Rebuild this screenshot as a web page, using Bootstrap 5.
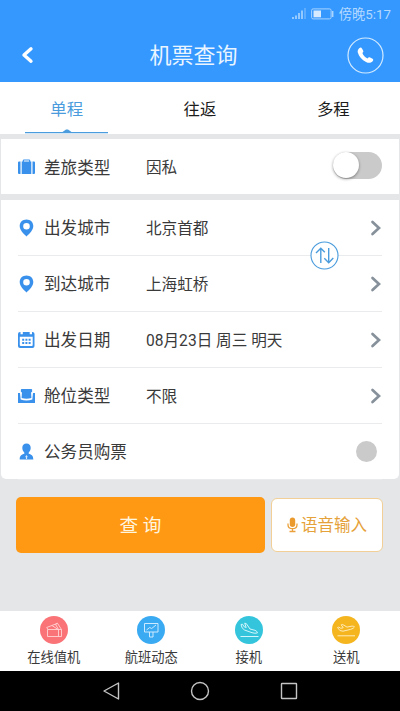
<!DOCTYPE html>
<html lang="zh-CN">
<head>
<meta charset="utf-8">
<meta name="viewport" content="width=device-width, initial-scale=1">
<title>机票查询</title>
<link href="https://cdn.jsdelivr.net/npm/bootstrap@5.3.0/dist/css/bootstrap.min.css" rel="stylesheet">
<style>
body{font-family:Roboto,"Noto Sans CJK SC",sans-serif;background:#e4e6e8;color:#3a3a3a;height:711px;overflow:hidden;line-height:1.2}
svg{display:block;flex:none}
.top-area{background:#3498ff;height:82px}
.status{height:28px;padding:0 9px 0 0;font-size:13.3px;color:#b3d9ff;gap:5px}
.status span{padding-top:1px}
.title-bar{height:54px;padding:0 16px 0 20px}
.title-bar h1{font-size:22px;font-weight:400;color:#eaf5ff;margin:2px 16px 0 0}
.trip-tabs{height:52px}
.trip-tabs .nav-link{color:#1c1c1c;font-size:16.4px;padding:3px 0 0;height:52px}
.trip-tabs .nav-link.active{color:#4a9cdd}
.tab-line{bottom:0;left:25px}
.form-body{padding:5px 1px 0;border-top:0}
.panel{padding:0 17px}
.panel-type{height:55px;margin-bottom:6px}
.panel-main{border-radius:0 0 5px 5px;height:279px}
.field{height:56px;border-bottom:1px solid #eaebec}
.field:last-child{border-bottom:0;height:55px}
.panel-type .field{padding-top:1px}
.field-icon{margin-right:9px}
.field-label{width:102px;font-size:16.6px;white-space:nowrap;padding-top:3px}
.field-value{font-size:15.6px;padding-top:3px}
.switch{width:49px;height:27px;background:#cacaca;border-radius:14px;margin-top:-4px}
.knob{width:26px;height:26px;background:#fff;box-shadow:0 1px 3px rgba(0,0,0,.4)}
.dot{width:21px;height:21px;background:#cacaca;margin-right:5px}
.swap{right:60px;top:41px}
.actions{padding:18px 16px 0 15px;gap:6px}
.btn-search{width:249px;height:56px;background:#ff9913!important;color:#fff6e0!important;font-size:18.6px;border:0;border-radius:5px}
.btn-voice{width:112px;height:54px;background:#fff!important;color:#e6a23a!important;border:1px solid #f1cf96!important;font-size:16.5px;border-radius:6px;margin-top:1px;gap:3px}
.btn span{display:inline-block;padding-top:3px}
.shortcuts{height:60px;font-size:13.3px;padding:5px 5px 0}
.shortcuts span{margin-top:6px}
.sys{height:40px;background:#000}
</style>
</head>
<body class="d-flex flex-column">
<header class="top-area">
  <div class="status d-flex align-items-center justify-content-end">
    <svg width="14" height="12" viewBox="0 0 14 12" stroke="#b3d9ff" stroke-width="1.5"><path d="M1 9v2M4 7.500v3.500M7 5v6M10 2.500v8.500"/><path d="M13 0v11" opacity=".45"/></svg>
    <svg width="23" height="12" viewBox="0 0 23 12"><rect x=".6" y=".9" width="19.500" height="10" rx="1.500" fill="none" stroke="#a9d4ff"/><rect x="2.500" y="2.500" width="7.500" height="6.800" fill="#d6eaff"/><path d="M21.700 3v6" stroke="#a9d4ff" stroke-width="1.500"/></svg>
    <span>傍晚5:17</span>
  </div>
  <div class="title-bar d-flex align-items-center justify-content-between">
    <svg width="36" height="20" viewBox="0 0 36 20"><path d="M11 3.800 4 10l7 6.200" fill="none" stroke="#fff" stroke-width="3.400" stroke-linecap="round" stroke-linejoin="round"/></svg>
    <h1>机票查询</h1>
    <svg width="37" height="37" viewBox="0 0 37 37"><circle cx="18.500" cy="18.500" r="17.500" fill="none" stroke="#d3eaff" stroke-width="1.200"/><path d="M12.200 11.300c1.300-1.200 2-1 2.900.4l1 1.800c.5 1 .3 1.600-.7 2.400.8 2.300 2.700 4.400 5.200 5.500.8-1.100 1.500-1.400 2.500-.9l2 1c1.400.8 1.500 1.600.5 2.800-1.600 1.900-4 1.800-6.600.6-4-1.900-7-5.300-8.200-9.400-.4-1.700.1-3.100 1.400-4.200z" fill="#fff"/></svg>
  </div>
</header>
<nav class="trip-tabs nav nav-justified bg-white position-relative">
  <a class="nav-link active d-flex align-items-center justify-content-center" href="#">单程</a>
  <a class="nav-link d-flex align-items-center justify-content-center" href="#">往返</a>
  <a class="nav-link d-flex align-items-center justify-content-center" href="#">多程</a>
  <svg class="tab-line position-absolute" width="83" height="5" viewBox="0 0 83 5"><path d="M0 3h37.500L41 .5h2L46.500 3H83v1.300H0z" fill="#4a9cdd"/></svg>
</nav>
<main class="form-body flex-grow-1">
  <section class="panel panel-type bg-white">
    <div class="field d-flex align-items-center border-0">
      <svg class="field-icon" width="17" height="17" viewBox="0 0 17 17" fill="#3a91ec"><path d="M0 3.500Q0 2.500 1 2.500h1.500v12.500H1q-1 0-1-1zM14.500 2.500H16q1 0 1 1V14q0 1-1 1h-1.500zM3.700 2.500h9.600V15H3.700z"/><path d="M5.300 3V1.700q0-.7.700-.7h5q.7 0 .7.700V3" fill="none" stroke="#3a91ec" stroke-width="1.200"/></svg>
      <span class="field-label">差旅类型</span><span class="field-value">因私</span>
      <div class="switch ms-auto"><div class="knob rounded-circle"></div></div>
    </div>
  </section>
  <section class="panel panel-main bg-white position-relative">
    <div class="field d-flex align-items-center">
      <svg class="field-icon" width="17" height="18" viewBox="-.5 0 17 18"><path d="M8 .5C4 .5 1.200 3.300 1.200 7c0 4 3.700 7.500 6.800 10.500 3.100-3 6.800-6.500 6.800-10.500C14.800 3.300 12 .5 8 .5zM8 4a3.300 3.300 0 1 1 0 6.600A3.300 3.300 0 0 1 8 4z" fill="#3a91ec" fill-rule="evenodd"/></svg>
      <span class="field-label">出发城市</span><span class="field-value">北京首都</span>
      <svg class="ms-auto" width="12" height="16" viewBox="0 0 12 16"><path d="M2.500 2 9 8l-6.500 6" fill="none" stroke="#87919b" stroke-width="2.700" stroke-linecap="round"/></svg>
    </div>
    <div class="field d-flex align-items-center">
      <svg class="field-icon" width="17" height="18" viewBox="-.5 0 17 18"><path d="M8 .5C4 .5 1.200 3.300 1.200 7c0 4 3.700 7.500 6.800 10.500 3.100-3 6.800-6.500 6.800-10.500C14.800 3.300 12 .5 8 .5zM8 4a3.300 3.300 0 1 1 0 6.600A3.300 3.300 0 0 1 8 4z" fill="#3a91ec" fill-rule="evenodd"/></svg>
      <span class="field-label">到达城市</span><span class="field-value">上海虹桥</span>
      <svg class="ms-auto" width="12" height="16" viewBox="0 0 12 16"><path d="M2.500 2 9 8l-6.500 6" fill="none" stroke="#87919b" stroke-width="2.700" stroke-linecap="round"/></svg>
    </div>
    <div class="field d-flex align-items-center">
      <svg class="field-icon" width="17" height="17" viewBox="0 0 17 17"><rect x="0" y="1" width="16.500" height="16" rx="2" fill="#3a91ec"/><path d="M1.800 5.800h12.900v8.200q0 1-1 1H2.800q-1 0-1-1z" fill="#fff"/><path d="M2.500 1h2.300v2.200H2.500zM11.700 1H14v2.200h-2.300z" fill="#fff"/><path d="M4.200 8.800h8.400M4.200 12h8.400" stroke="#3a91ec" stroke-width="2" stroke-dasharray="2 1.200"/></svg>
      <span class="field-label">出发日期</span><span class="field-value">08月23日 周三 明天</span>
      <svg class="ms-auto" width="12" height="16" viewBox="0 0 12 16"><path d="M2.500 2 9 8l-6.500 6" fill="none" stroke="#87919b" stroke-width="2.700" stroke-linecap="round"/></svg>
    </div>
    <div class="field d-flex align-items-center">
      <svg class="field-icon" width="17" height="16" viewBox="0 0 16 16" preserveAspectRatio="none" fill="#3a91ec"><path d="M3.500 1h9q.8 0 .8.800v2l-1 .8.300 5.500q-4.600 1.200-9.200 0l.3-5.500-1-.8v-2Q2.700 1 3.500 1zM0 5h1.900l.6 6.500q5.500 1.800 11 0l.6-6.500H16v10H0z"/></svg>
      <span class="field-label">舱位类型</span><span class="field-value">不限</span>
      <svg class="ms-auto" width="12" height="16" viewBox="0 0 12 16"><path d="M2.500 2 9 8l-6.500 6" fill="none" stroke="#87919b" stroke-width="2.700" stroke-linecap="round"/></svg>
    </div>
    <div class="field d-flex align-items-center">
      <svg class="field-icon" width="17" height="17" viewBox="-.5 0 17 17"><path d="M8 .5c2.700 0 4.200 1.700 4.200 4.200 0 2.200-.8 3.700-2 4.700v1.400c3 .8 4.600 2 4.600 5.700H1.200c0-3.700 1.600-4.900 4.600-5.700V9.400c-1.200-1-2-2.500-2-4.700C3.800 2.200 5.300.5 8 .5z" fill="#3a91ec"/><path d="m8 12 .8 1.200L8.500 16h-1l-.3-2.800z" fill="#d8eaff"/></svg>
      <span class="field-label">公务员购票</span>
      <span class="dot rounded-circle ms-auto"></span>
    </div>
    <svg class="swap position-absolute" width="29" height="29" viewBox="0 0 29 29" fill="none" stroke="#4a9cdd"><circle cx="14.500" cy="14.500" r="13.500" fill="#fff" stroke-width="1.100"/><path d="M10.800 22V7.500M6 12l4.800-4.700 4 3.900M18.700 7v14.500M14.300 17.300l4.400 4.400 4.600-4.600" stroke-width="1.400"/></svg>
  </section>
  <div class="actions d-flex align-items-start">
    <button class="btn btn-search p-0" type="button"><span>查 询</span></button>
    <button class="btn btn-voice p-0 d-flex align-items-center justify-content-center" type="button">
      <svg width="11" height="16" viewBox="0 0 11 16" fill="none" stroke="#eba03a"><rect x="2.800" y=".5" width="5.400" height="9.500" rx="2.700" fill="#eb9a2e" stroke="none"/><path d="M1 6.500v1.200c0 2.200 1.700 4 4.500 4s4.500-1.800 4.500-4V6.500M5.500 11.500v2.700M2.500 14.500h6" stroke-width="1.300"/></svg>
      <span>语音输入</span>
    </button>
  </div>
</main>
<footer>
  <div class="shortcuts row g-0 bg-white text-center">
    <div class="col d-flex flex-column align-items-center">
      <svg width="28" height="28" viewBox="0 0 28 28" fill="none" stroke="#ffd2d4" stroke-width=".9"><circle cx="14" cy="14" r="14" fill="#f97377" stroke="none"/><path d="M7.500 13.500h14v7h-14zM18.500 13.500v7M8 13.500l-1.300-2L17.500 7.300l4 6.200M12 9.500l6 4M17.500 7.300l-2 1 3 5.200"/></svg>
      <span>在线值机</span>
    </div>
    <div class="col d-flex flex-column align-items-center">
      <svg width="28" height="28" viewBox="0 0 28 28" fill="none" stroke="#cdeaff" stroke-width="1"><circle cx="14" cy="14" r="14" fill="#3aaaf2" stroke="none"/><path d="M7.500 7.500h13.500v8.500H7.500zM12.500 16v5h3.500v-5M9.500 14l3.200-2.500 2 1L19 9"/></svg>
      <span>航班动态</span>
    </div>
    <div class="col d-flex flex-column align-items-center">
      <svg width="28" height="28" viewBox="0 0 28 28" fill="none" stroke="#d2f6fb" stroke-width="1" stroke-linejoin="round"><circle cx="14" cy="14" r="14" fill="#34c5dc" stroke="none"/><path d="M6 8.500l1.500-.3 1.700 2.600 2 .7-1.500-4.300 1.600.4 3.700 5.400 5 1.300q2.300 1 2.500 2.600-2.500.8-5.500-.2L9.500 14Q6.500 12.500 6 8.500zM5.500 20.500h18"/></svg>
      <span>接机</span>
    </div>
    <div class="col d-flex flex-column align-items-center">
      <svg width="28" height="28" viewBox="0 0 28 28" fill="none" stroke="#ffebb8" stroke-width="1" stroke-linejoin="round"><circle cx="14" cy="14" r="14" fill="#f4b51f" stroke="none"/><path d="m5.500 11.500 1.300-.4 2 1.200 2.400-.5-2-3 1.500-.3 4.300 2.600 5-1q2.200-.2 2.500.9-1 1.700-4 2.400L11 15.200q-3.500.5-5.500-3.700zM5.500 19.800h17.500"/></svg>
      <span>送机</span>
    </div>
  </div>
  <div class="sys d-flex justify-content-center align-items-center">
    <svg width="200" height="22" viewBox="0 0 200 22" fill="none" stroke="#c4c4c4" stroke-width="1.400" stroke-linejoin="round"><path d="M18.500 3v16L4 11z"/><circle cx="100" cy="11" r="8.500"/><rect x="181.500" y="3.500" width="15" height="15" rx=".5"/></svg>
  </div>
</footer>
<script src="https://cdn.jsdelivr.net/npm/bootstrap@5.3.0/dist/js/bootstrap.bundle.min.js"></script>
</body>
</html>
